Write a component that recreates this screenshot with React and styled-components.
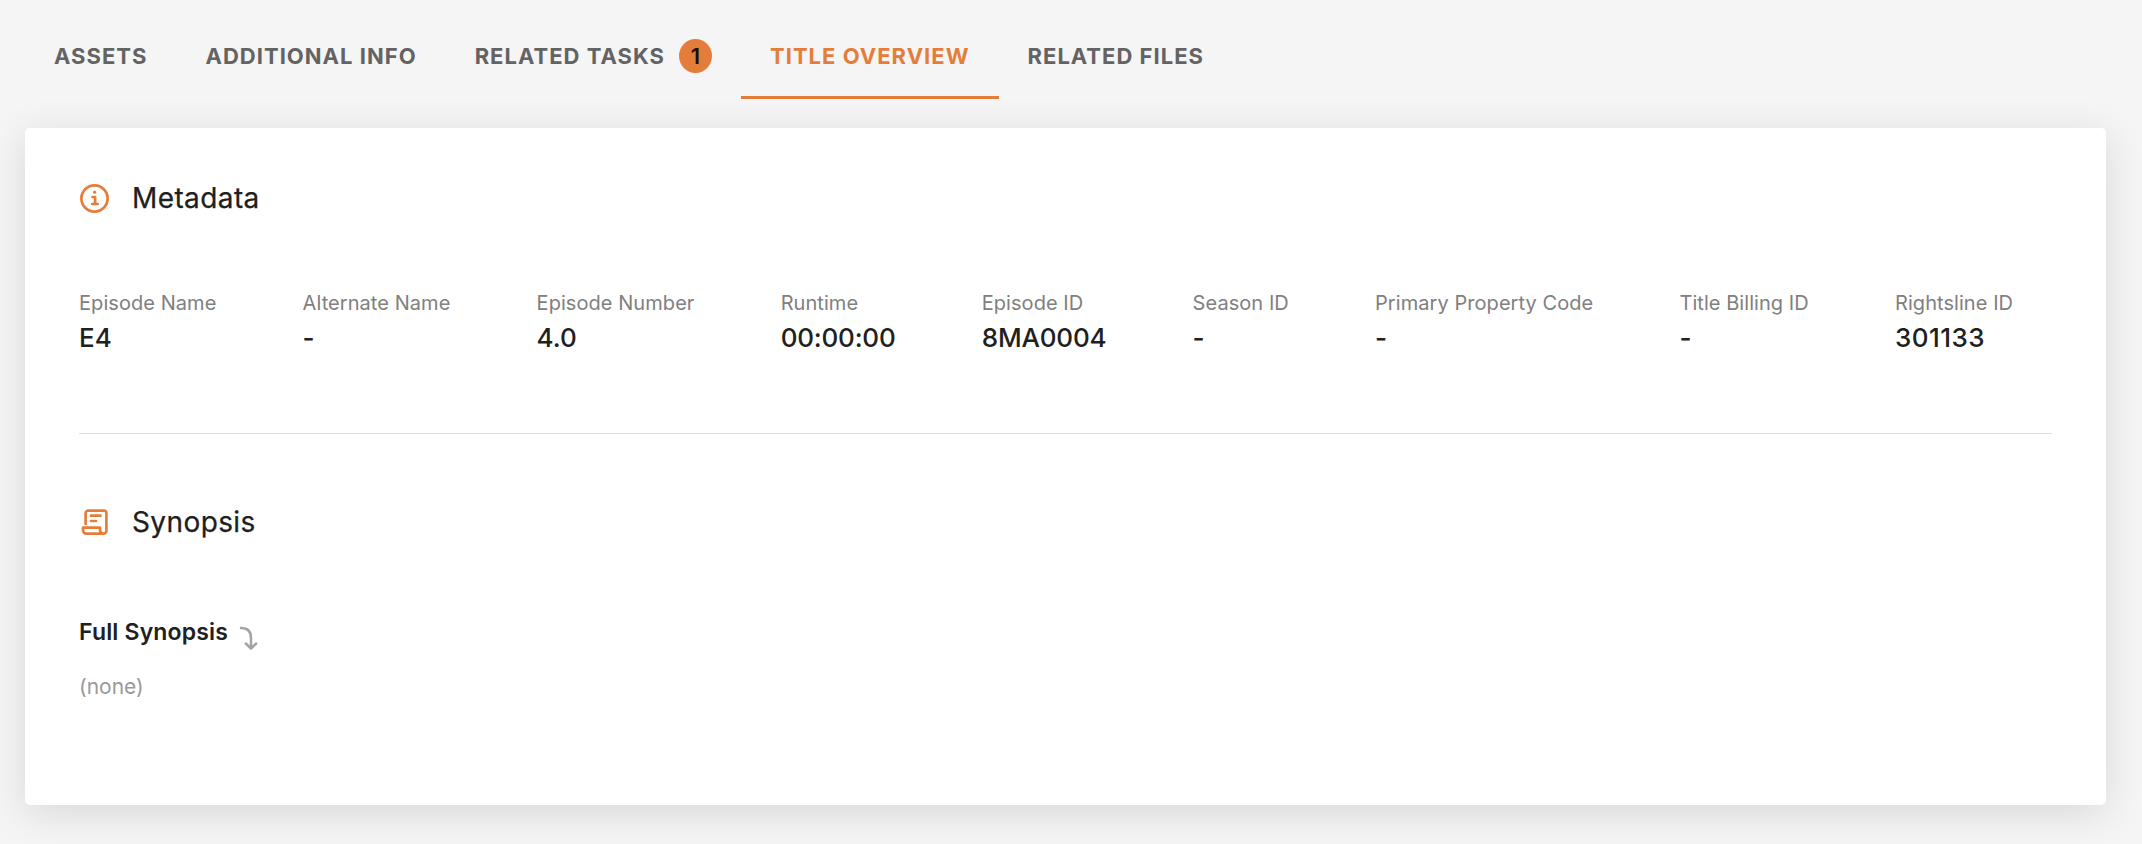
import React from 'react';
import styled, { createGlobalStyle, css } from 'styled-components';

const GlobalStyle = createGlobalStyle`
  *, *::before, *::after { box-sizing: border-box; }
  body {
    margin: 0;
    background: #f5f5f5;
    font-family: Inter, 'Liberation Sans', sans-serif;
    color: #202020;
    -webkit-font-smoothing: antialiased;
  }
`;

const Page = styled.main`
  min-height: 844px;
  padding: 13px 36px 39px 25px;
  overflow: hidden;
`;

const TabBar = styled.nav`
  display: flex;
  height: 86px;
  margin-bottom: 29px;
`;

const Tab = styled.button`
  display: flex;
  align-items: center;
  gap: 14px;
  padding: 0 29px;
  border: 0;
  border-top: 3px solid transparent;
  border-bottom: 3px solid ${(p) => (p.$active ? '#e57d3a' : 'transparent')};
  background: none;
  color: ${(p) => (p.$active ? '#e57d3a' : '#636363')};
  font: 700 22px/28px Inter, 'Liberation Sans', sans-serif;
  letter-spacing: 1.02px;
  white-space: nowrap;
`;

const Badge = styled.span`
  display: flex;
  align-items: center;
  justify-content: center;
  width: 33px;
  height: 34px;
  border-radius: 50%;
  background: #e57d3a;
  color: #1a0d04;
  font-size: 22px;
  font-weight: 600;
  letter-spacing: 0;
`;

const Card = styled.article`
  height: 677px;
  padding: 53px 54px 54px;
  border-radius: 5px;
  background: #fff;
  box-shadow: 0 8px 40px rgba(0, 0, 0, 0.12);
`;

const SectionHeader = styled.header`
  display: flex;
  align-items: center;
  gap: 21px;
  height: 34px;
`;

const SectionTitle = styled.h2`
  margin: 0;
  font-size: 28px;
  line-height: 34px;
  font-weight: 400;
  letter-spacing: 0.4px;
  -webkit-text-stroke: 0.25px currentColor;
`;

const iconBase = css`
  display: block;
  flex: none;
  fill: none;
  stroke-linecap: round;
  stroke-linejoin: round;
`;

const SectionIcon = styled.svg`
  ${iconBase}
  width: 32px;
  height: 32px;
  stroke: #e57d3a;
  stroke-width: 2.7;
`;

const ArrowIcon = styled.svg`
  ${iconBase}
  width: 20px;
  height: 26px;
  margin-top: 10px;
  stroke: #a3a3a3;
  stroke-width: 2.5;
`;

const FieldList = styled.dl`
  display: flex;
  gap: 86.2px;
  margin: 74px 0 0;
  height: 144px;
`;

const Field = styled.div`
  flex: none;
`;

const FieldLabel = styled.dt`
  color: #808080;
  font-size: 20px;
  line-height: 28px;
  letter-spacing: 0.06px;
  white-space: nowrap;
`;

const FieldValue = styled.dd`
  margin: 4px 0 0;
  font-size: 26px;
  line-height: 34px;
  font-weight: 500;
  letter-spacing: ${(p) => p.$tracking ?? 0}px;
  white-space: nowrap;
`;

const Divider = styled.hr`
  height: 1px;
  margin: 0 0 71px;
  border: 0;
  background: #dedede;
`;

const SynopsisHeading = styled.h3`
  display: flex;
  gap: 11px;
  height: 32px;
  margin: 77px 0 0;
  font-size: 23px;
  line-height: 32px;
  font-weight: 600;
  letter-spacing: 0.17px;
`;

const SynopsisText = styled.p`
  margin: 25px 0 0;
  color: #999;
  font-size: 21px;
  line-height: 28px;
`;

const tabs = [
  { label: 'ASSETS' },
  { label: 'ADDITIONAL INFO' },
  { label: 'RELATED TASKS', count: 1 },
  { label: 'TITLE OVERVIEW', active: true },
  { label: 'RELATED FILES' },
];

const fields = [
  { label: 'Episode Name', value: 'E4' },
  { label: 'Alternate Name', value: '-' },
  { label: 'Episode Number', value: '4.0' },
  { label: 'Runtime', value: '00:00:00', tracking: -0.2 },
  { label: 'Episode ID', value: '8MA0004', tracking: -0.18 },
  { label: 'Season ID', value: '-' },
  { label: 'Primary Property Code', value: '-' },
  { label: 'Title Billing ID', value: '-' },
  { label: 'Rightsline ID', value: '301133', tracking: 0.45 },
];

function InfoIcon() {
  return (
    <SectionIcon viewBox="0 0 32 32" aria-hidden="true">
      <circle cx="15.5" cy="16.5" r="13.1" />
      <path d="M13.5 15h2.6v6.800M13.2 22h5.500" />
      <circle cx="15.6" cy="10.2" r="1.6" fill="#e57d3a" stroke="none" />
    </SectionIcon>
  );
}

function ScrollIcon() {
  return (
    <SectionIcon viewBox="0 0 32 32" aria-hidden="true">
      <path d="M6.600 18V7.100a2.500 2.500 0 0 1 2.500-2.500h15.800a2.500 2.500 0 0 1 2.500 2.500v17.600a3 3 0 0 1-3 3H7.500A3.500 3.500 0 0 1 4 24.200v-2.600h17v2.700a3.400 3.400 0 0 0 3.400 3.400" />
      <path d="M12 9.700h9.500M12 15h5" />
    </SectionIcon>
  );
}

export default function App() {
  return (
    <>
      <GlobalStyle />
      <Page>
        <TabBar>
          {tabs.map((tab) => (
            <Tab key={tab.label} $active={tab.active}>
              {tab.label}
              {tab.count && <Badge>{tab.count}</Badge>}
            </Tab>
          ))}
        </TabBar>
        <Card>
          <SectionHeader>
            <InfoIcon />
            <SectionTitle>Metadata</SectionTitle>
          </SectionHeader>
          <FieldList>
            {fields.map(({ label, value, tracking }) => (
              <Field key={label}>
                <FieldLabel>{label}</FieldLabel>
                <FieldValue $tracking={tracking}>{value}</FieldValue>
              </Field>
            ))}
          </FieldList>
          <Divider />
          <SectionHeader>
            <ScrollIcon />
            <SectionTitle>Synopsis</SectionTitle>
          </SectionHeader>
          <SynopsisHeading>
            Full Synopsis
            <ArrowIcon viewBox="0 0 20 26" aria-hidden="true">
              <path d="M2 2c7 0 10 3.500 10 10v10M6.800 17.500l5.200 5 5.200-5" />
            </ArrowIcon>
          </SynopsisHeading>
          <SynopsisText>(none)</SynopsisText>
        </Card>
      </Page>
    </>
  );
}
